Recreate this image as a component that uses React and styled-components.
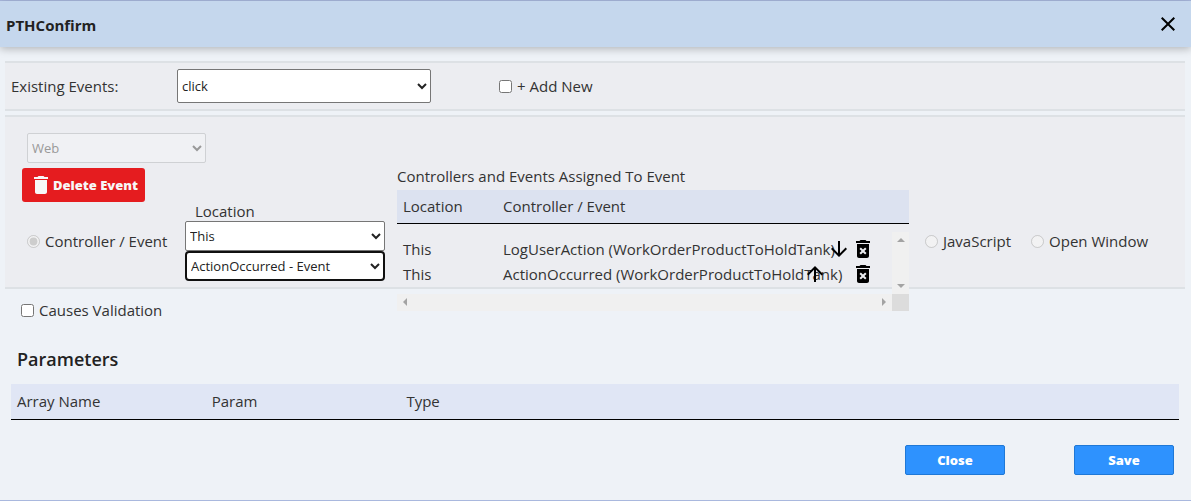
import React from "react";
import styled, { createGlobalStyle } from "styled-components";
import {
  MdArrowDownward,
  MdArrowUpward,
  MdClose,
  MdDelete,
  MdDeleteForever
} from "react-icons/md";

const GlobalStyle = createGlobalStyle`
  * {
    box-sizing: border-box;
  }
  body {
    margin: 0;
    background: #eef2f7;
    color: #333;
    font-family: "Segoe UI", "Open Sans", "Noto Sans", sans-serif;
    font-size: 15px;
    line-height: 20px;
  }
`;

const Dialog = styled.div`
  min-height: 100vh;
  border-top: 1px solid #a9b8de;
  border-bottom: 1px solid #a9b8de;
`;

const Header = styled.header`
  height: 46px;
  padding: 0 11px 0 6px;
  display: flex;
  align-items: center;
  justify-content: space-between;
  background: #c5d7ed;
  box-shadow: 0 2px 8px rgba(0, 0, 0, 0.25);
`;

const Title = styled.h1`
  margin: 0;
  padding-top: 2px;
  font-size: 15px;
  font-weight: 700;
  color: #222;
`;

const IconButton = styled.button`
  width: 24px;
  height: 24px;
  padding: 0;
  border: none;
  background: none;
  color: #000;
  font-size: 24px;
  line-height: 0;
  visibility: ${props => (props.$hidden ? "hidden" : "visible")};
`;

const Content = styled.main`
  padding: 14px 6px 0 5px;
`;

const Section = styled.section`
  background: #ecedf1;
  border-top: 2px solid #dde1e5;
  border-bottom: 2px solid #dde1e5;
`;

const EventBar = styled(Section)`
  height: 50px;
  margin-bottom: 4px;
  padding: 0 6px;
  display: flex;
  align-items: center;
`;

const EventLabel = styled.label`
  width: 166px;
`;

const Select = styled.select`
  display: block;
  width: ${props => props.$width};
  height: ${props => props.$height || "30px"};
  padding: 0;
  background: #fff;
  border: ${props => (props.$active ? "2px solid #101010" : "1px solid #767676")};
  border-radius: ${props => (props.$active ? "4px" : "2px")};
  color: #222;
  font-family: inherit;
  font-size: 13px;

  &:disabled {
    background: #f0f1f4;
    border-color: #cfd1d4;
    color: #999;
    opacity: 1;
  }
`;

const Choice = styled.label`
  display: flex;
  align-items: center;
  gap: 5px;
  white-space: nowrap;

  input {
    width: 13px;
    height: 13px;
    margin: 0;
  }
`;

const AddNew = styled(Choice)`
  margin-left: 68px;
`;

const EventEditor = styled(Section)`
  padding-top: 16px;
  display: grid;
  grid-template-columns: 180px 212px 512px 1fr;
  grid-template-rows: 35px 34px 85px;
`;

const PlatformCell = styled.div`
  grid-column: 1 / 5;
  padding-left: 22px;
`;

const DeleteCell = styled.div`
  grid-column: 1;
  padding-left: 17px;
`;

const DeleteButton = styled.button`
  width: 123px;
  height: 34px;
  padding: 0;
  display: flex;
  align-items: center;
  justify-content: center;
  background: #e51c1f;
  border: none;
  border-radius: 3px;
  color: #f7f7f7;
  font-family: inherit;
  font-size: 13px;
  font-weight: 800;

  svg {
    width: 24px;
    height: 24px;
  }
`;

const ControllerCell = styled.div`
  grid-column: 1;
  grid-row: 3;
  height: 78px;
  padding-left: 22px;
  display: flex;
  align-items: center;
`;

const LocationCell = styled.div`
  grid-column: 2;
  grid-row: 3;

  label {
    display: block;
    height: 19px;
    padding-left: 10px;
    line-height: 18px;
  }
`;

const AssignedPanel = styled.div`
  grid-column: 3;
  grid-row: 2 / 4;
  margin-bottom: -24px;
`;

const OtherTypes = styled.div`
  grid-column: 4;
  grid-row: 3;
  height: 78px;
  padding-left: 16px;
  display: flex;
  align-items: center;
  gap: 20px;
`;

const Table = styled.table`
  width: 100%;
  table-layout: fixed;
  border-collapse: collapse;
  text-align: left;
  white-space: nowrap;

  th,
  td {
    padding: 0 0 0 6px;
    font-weight: 400;
  }
`;

const HeadRow = styled.tr`
  height: ${props => props.$height};
  background: ${props => props.$color};
  border-bottom: 1px solid #000;
`;

const PanelTitle = styled.div`
  height: 22px;
  line-height: 16px;
`;

const ScrollBox = styled.div`
  margin-top: 8px;
  display: grid;
  grid-template-columns: 1fr 17px;
  grid-template-rows: 62px 17px;
`;

const ScrollView = styled.div`
  padding-top: 5px;

  tr {
    height: 25px;
  }
`;

const ScrollBar = styled.div`
  padding: ${props => (props.$vertical ? "6px 0" : "0 6px")};
  display: flex;
  flex-direction: ${props => (props.$vertical ? "column" : "row")};
  align-items: center;
  justify-content: space-between;
  background: #f0f0f0;
  color: #a3a3a3;

  svg {
    display: block;
  }
`;

const ScrollCorner = styled.div`
  background: #dcdcdc;
`;

const Actions = styled.div`
  margin-left: -6px;
  display: flex;
  position: relative;
`;

const ValidationRow = styled.div`
  padding: 11px 16px 0;
`;

const Parameters = styled.section`
  padding: 27px 6px 0;
`;

const ParametersTitle = styled.h2`
  margin: 0;
  padding: 0 6px 13px;
  font-size: 18px;
  font-weight: 600;
  line-height: 24px;
  color: #222;
`;

const Footer = styled.footer`
  padding: 25px 11px 20px;
  display: flex;
  justify-content: flex-end;
  gap: 69px;
`;

const FooterButton = styled.button`
  width: 100px;
  height: 30px;
  padding: 0;
  background: #2e92fe;
  border: 1px solid #1f78d6;
  border-radius: 2px;
  color: #fff;
  font-family: inherit;
  font-size: 13px;
  font-weight: 800;
`;

const events = [
  { location: "This", name: "LogUserAction (WorkOrderProductToHoldTank)" },
  { location: "This", name: "ActionOccurred (WorkOrderProductToHoldTank)" }
];

const Arrow = ({ points, width, height }) => (
  <svg width={width} height={height} viewBox={`0 0 ${width} ${height}`}>
    <polygon points={points} fill="currentColor" />
  </svg>
);

const Col = styled.col`
  width: ${props => props.$width};
`;

const AssignedEvents = () => (
  <AssignedPanel>
    <PanelTitle>Controllers and Events Assigned To Event</PanelTitle>
    <Table>
      <colgroup>
        <Col $width="100px" />
        <Col />
      </colgroup>
      <thead>
        <HeadRow $height="33px" $color="#dce2f0">
          <th>Location</th>
          <th>Controller / Event</th>
        </HeadRow>
      </thead>
    </Table>
    <ScrollBox>
      <ScrollView>
        <Table>
          <colgroup>
            <Col $width="100px" />
            <Col $width="306px" />
            <Col />
          </colgroup>
          <tbody>
            {events.map((event, index) => (
              <tr key={event.name}>
                <td>{event.location}</td>
                <td>{event.name}</td>
                <td>
                  <Actions>
                    <IconButton aria-label="Move up" $hidden={index === 0}>
                      <MdArrowUpward />
                    </IconButton>
                    <IconButton
                      aria-label="Move down"
                      $hidden={index === events.length - 1}
                    >
                      <MdArrowDownward />
                    </IconButton>
                    <IconButton aria-label="Remove">
                      <MdDeleteForever />
                    </IconButton>
                  </Actions>
                </td>
              </tr>
            ))}
          </tbody>
        </Table>
      </ScrollView>
      <ScrollBar $vertical>
        <Arrow width={8} height={4} points="0,4 4,0 8,4" />
        <Arrow width={8} height={4} points="0,0 4,4 8,0" />
      </ScrollBar>
      <ScrollBar>
        <Arrow width={4} height={8} points="4,0 0,4 4,8" />
        <Arrow width={4} height={8} points="0,0 4,4 0,8" />
      </ScrollBar>
      <ScrollCorner />
    </ScrollBox>
  </AssignedPanel>
);

const App = () => {
  return (
    <Dialog>
      <GlobalStyle />
      <Header>
        <Title>PTHConfirm</Title>
        <IconButton aria-label="Close dialog">
          <MdClose />
        </IconButton>
      </Header>
      <Content>
        <EventBar>
          <EventLabel htmlFor="existing">Existing Events:</EventLabel>
          <Select id="existing" $width="254px" $height="34px">
            <option>click</option>
          </Select>
          <AddNew>
            <input type="checkbox" />
            <span>+ Add New</span>
          </AddNew>
        </EventBar>
        <EventEditor>
          <PlatformCell>
            <Select aria-label="Platform" $width="179px" disabled>
              <option>Web</option>
            </Select>
          </PlatformCell>
          <DeleteCell>
            <DeleteButton>
              <MdDelete />
              Delete Event
            </DeleteButton>
          </DeleteCell>
          <ControllerCell>
            <Choice>
              <input type="radio" name="type" defaultChecked disabled />
              <span>Controller / Event</span>
            </Choice>
          </ControllerCell>
          <LocationCell>
            <label htmlFor="location">Location</label>
            <Select id="location" $width="200px">
              <option>This</option>
            </Select>
            <Select aria-label="Event" $width="200px" $active>
              <option>ActionOccurred - Event</option>
            </Select>
          </LocationCell>
          <AssignedEvents />
          <OtherTypes>
            <Choice>
              <input type="radio" name="type" disabled />
              <span>JavaScript</span>
            </Choice>
            <Choice>
              <input type="radio" name="type" disabled />
              <span>Open Window</span>
            </Choice>
          </OtherTypes>
        </EventEditor>
        <ValidationRow>
          <Choice>
            <input type="checkbox" />
            <span>Causes Validation</span>
          </Choice>
        </ValidationRow>
        <Parameters>
          <ParametersTitle>Parameters</ParametersTitle>
          <Table>
            <colgroup>
              <Col $width="16.67%" />
              <Col $width="16.67%" />
              <Col />
            </colgroup>
            <thead>
              <HeadRow $height="35px" $color="#e0e6f5">
                <th>Array Name</th>
                <th>Param</th>
                <th>Type</th>
              </HeadRow>
            </thead>
          </Table>
        </Parameters>
        <Footer>
          <FooterButton>Close</FooterButton>
          <FooterButton>Save</FooterButton>
        </Footer>
      </Content>
    </Dialog>
  );
};

export default App;
